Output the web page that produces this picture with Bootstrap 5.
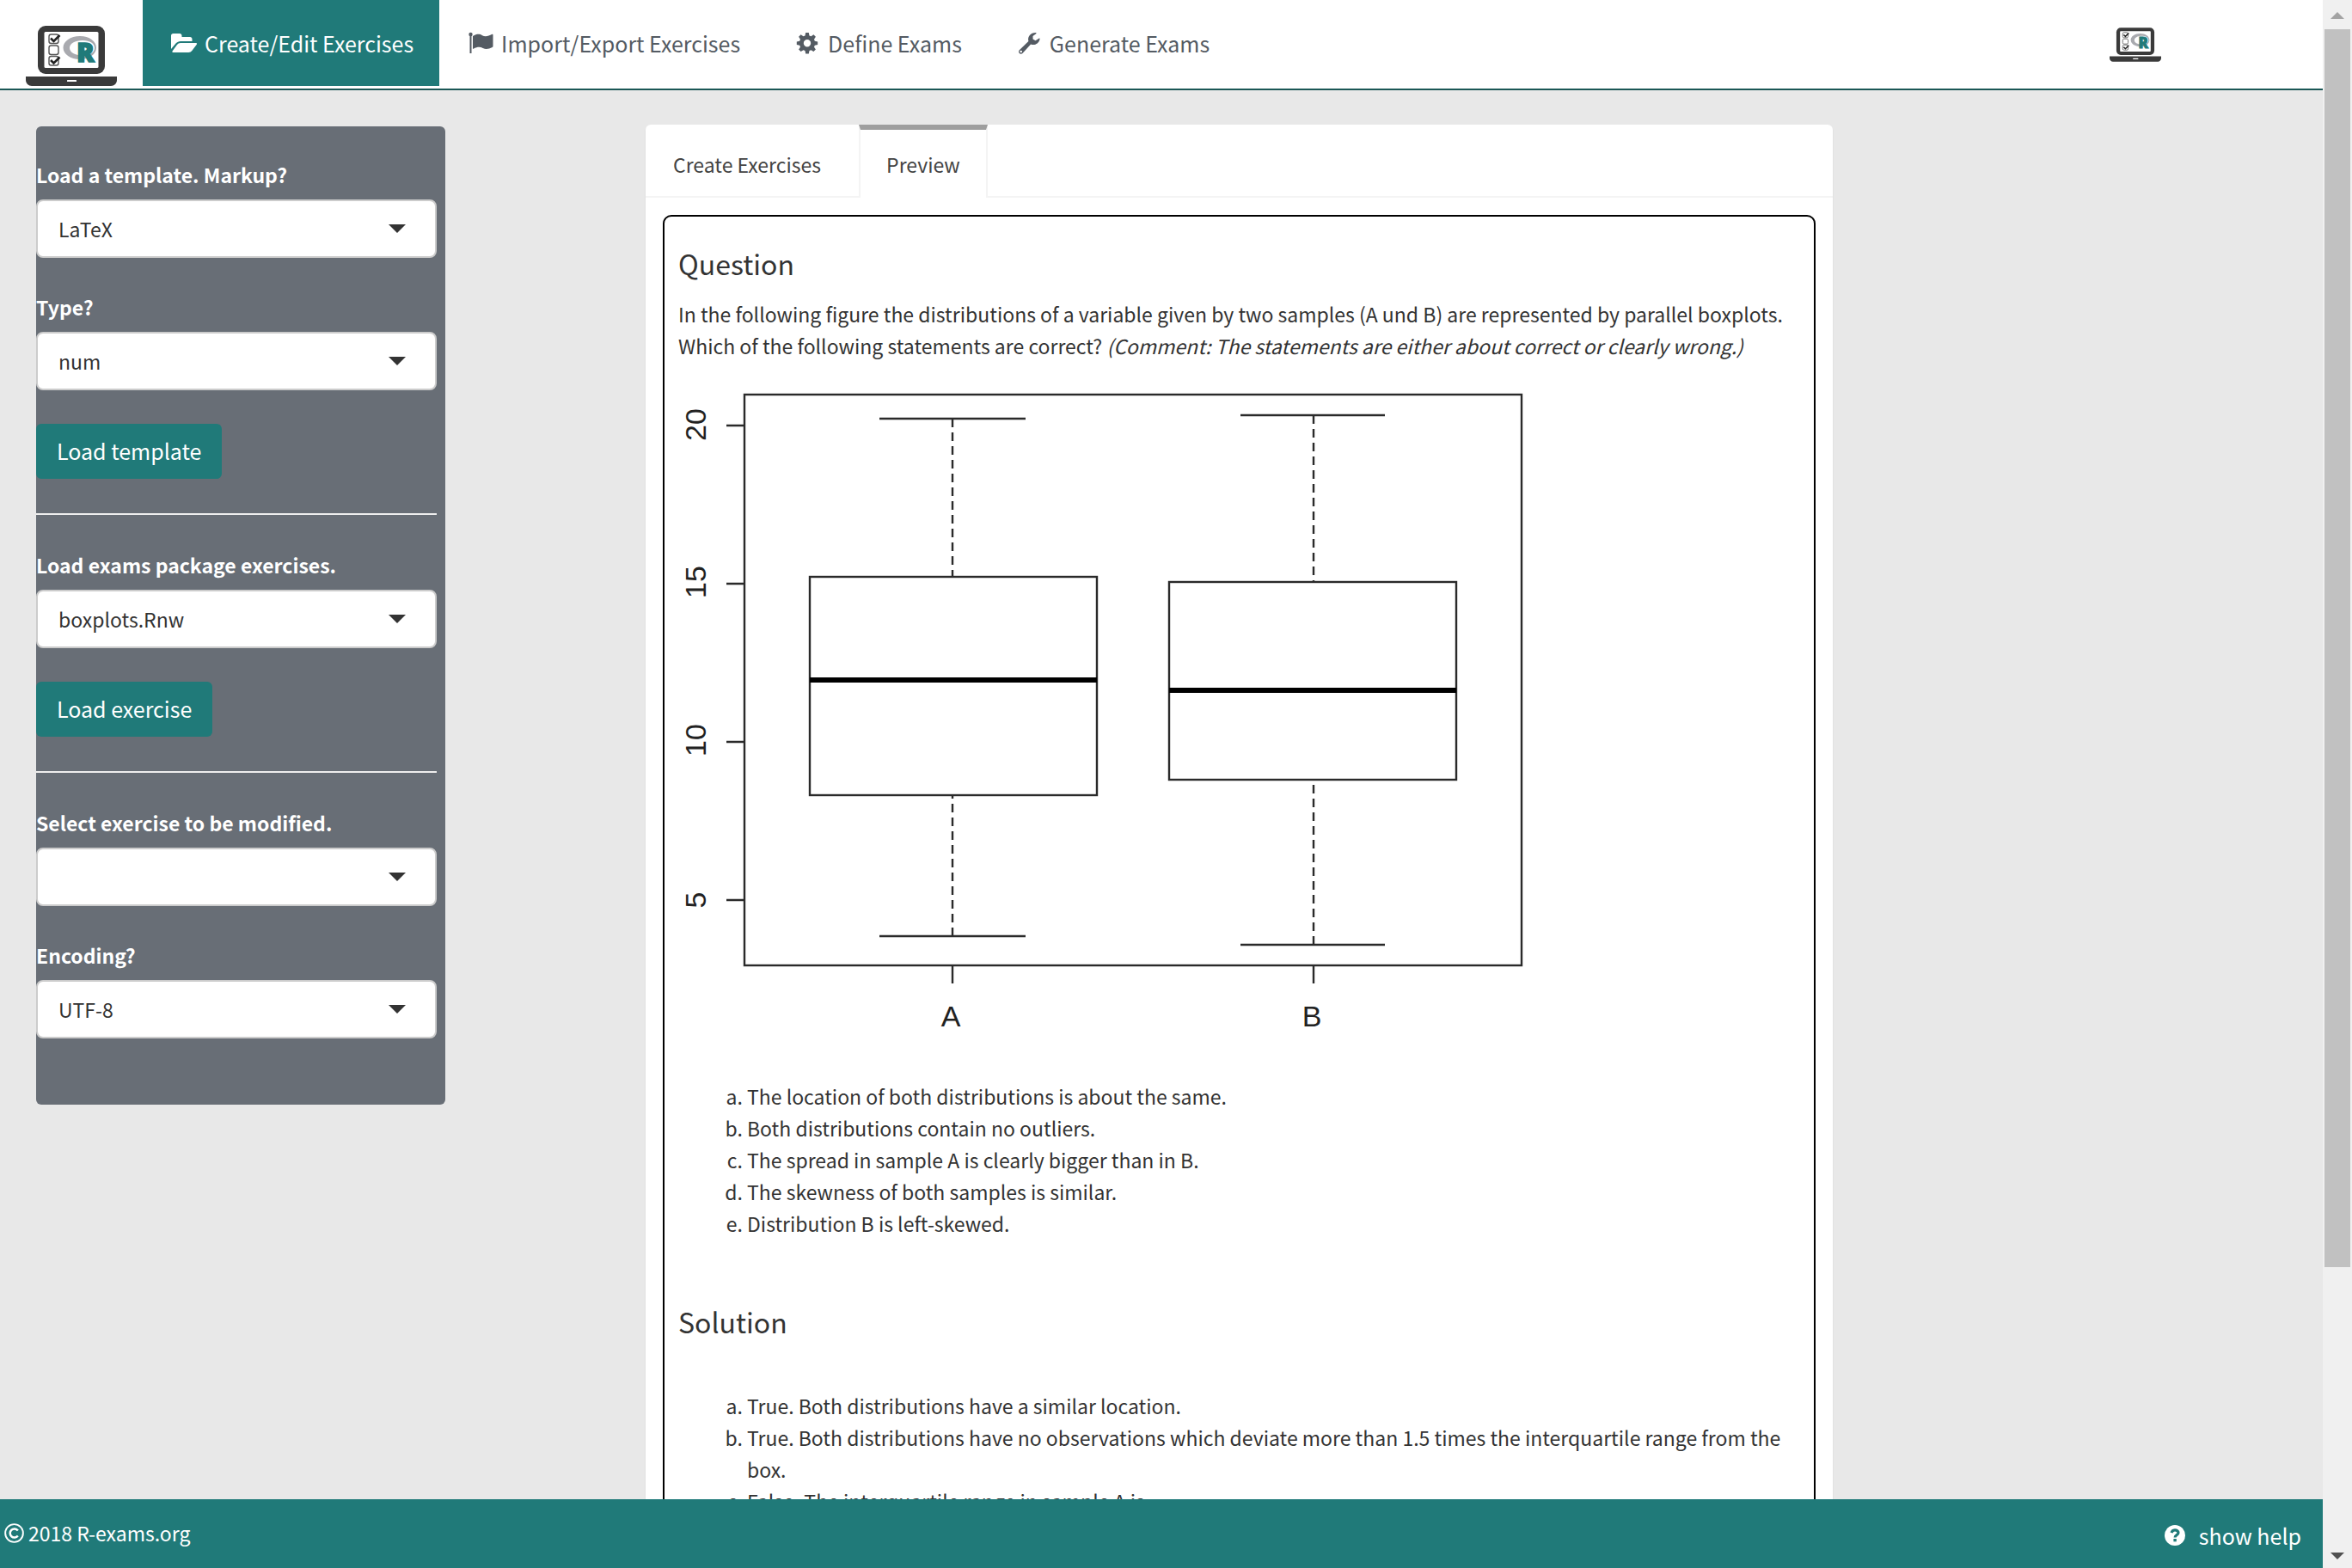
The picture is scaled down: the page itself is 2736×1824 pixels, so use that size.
<!DOCTYPE html>
<html lang="en">
<head>
<meta charset="utf-8">
<meta name="viewport" content="width=device-width, initial-scale=1">
<title>R/exams</title>
<link rel="stylesheet" href="https://cdn.jsdelivr.net/npm/bootstrap@5.3.0/dist/css/bootstrap.min.css">
<style>
:root { --teal: #207a79; --ink: #333; }
body { font-family: "Noto Sans CJK SC", "Open Sans", sans-serif; font-size: 23px; line-height: 37px; color: var(--ink); background: #e8e8e8; }
.topbar { background: #fff; border-bottom: 2px solid #1b5756; padding: 0 188px 3px 30px; }
.topbar .nav-link { height: 100px; padding: 0 30px; font-size: 25px; color: #545b63; gap: 6px; }
.topbar .nav-link.active { background: var(--teal); color: #fff; }
.topbar .nav-link svg { width: 36px; height: 28px; }
.brand-logo { width: 106px; height: 70px; margin: 30px 30px 0 0; }
.mini-logo { width: 60px; height: 40px; margin-top: 3px; }
.page-grid { display: grid; grid-template-columns: 42fr 476fr 233fr 1381fr 570fr; }
.side-panel { grid-column: 2; margin-top: 42px; padding: 38px 10px 77px 0; background: #686e76; border-radius: 6px; gap: 39px; color: #fff; align-self: start; }
.side-panel label { font-weight: 700; margin-bottom: 10px; display: block; }
.side-panel hr { margin: 1px 0; border-top: 2px solid #eee; opacity: 1; }
.side-panel .form-select { height: 68px; padding: 0 60px 0 24px; font-size: 23px; line-height: 37px; color: var(--ink); border: 2px solid #ccc; border-radius: 8px;
  background: #fff url("data:image/svg+xml,%3Csvg xmlns='http://www.w3.org/2000/svg' viewBox='0 0 20 10'%3E%3Cpath fill='%23333' d='M0 0h20L10 10z'/%3E%3C/svg%3E") no-repeat right 34px center / 20px 10px; }
.btn-teal { --bs-btn-color: #fff; --bs-btn-bg: #207a79; --bs-btn-hover-color: #fff; --bs-btn-hover-bg: #1b6665; --bs-btn-border-width: 0; --bs-btn-border-radius: 6px; height: 64px; padding: 0 24px; font-size: 25px; }
.tab-panel { grid-column: 4; margin-top: 40px; background: #fff; border-radius: 6px; box-shadow: 0 2px 2px rgba(0,0,0,.1); }
.tab-panel .nav-tabs { border-bottom: 2px solid #f4f4f4; }
.tab-panel .nav-tabs .nav-link { height: 85px; margin: 0 12px -2px 0; padding: 2px 30px 0; border: 2px solid transparent; border-top-width: 6px; border-bottom: 0; border-radius: 0; color: #444; }
.tab-panel .nav-tabs .nav-link.active { border-color: #9e9e9e #f4f4f4 #fff; background: #fff; }
.preview-box { margin: 20px; padding: 34px 16px 60px; border: 2px solid #000; border-radius: 10px; }
.preview-box h4 { font-size: 32px; font-weight: 400; line-height: 40px; margin: 0 0 21px; }
.preview-box ol { list-style: lower-alpha; padding-left: 80px; margin: 0; }
.preview-box .solution-title { padding-top: 75px; margin-bottom: 60px; }
.boxplot { display: block; width: 1000px; max-width: 100%; margin-bottom: 16px; }
.boxplot text { font-family: "Liberation Sans", Arial, sans-serif; fill: #222; text-anchor: middle; }
.statusbar { position: absolute; left: 0; right: 0; bottom: 0; height: 80px; background: var(--teal); color: #fff; padding: 0 25px 0 5px; }
.statusbar span { gap: 5px; padding-bottom: 2px; }
.statusbar a { font-size: 25px; gap: 16px; padding-top: 4px; }
.scroll-rail { width: 34px; background: #f0f0f0; padding: 14px 2px 10px; }
.scroll-rail .thumb { background: #c1c1c1; height: 80%; margin-top: 12px; }
</style>
</head>
<body>
<svg class="d-none" aria-hidden="true">
  <symbol id="logo" viewBox="0 0 106 70">
    <rect x="14" y="0" width="78" height="56" rx="9" fill="#3a3a3a"/>
    <rect x="21.500" y="7" width="63" height="42" rx="1.500" fill="#fff"/>
    <g fill="none" stroke="#555" stroke-width="1.400"><rect x="27" y="10" width="11" height="10.500" rx="2.500"/><rect x="27" y="23" width="11" height="10.500" rx="2.500"/><rect x="27" y="35.500" width="11" height="10.500" rx="2.500"/></g>
    <g fill="none" stroke="#222" stroke-width="2.600"><path d="M29 14.500l3.500 3.500 7-7"/><path d="M29 40l3.500 3.500 7-7"/></g>
    <path fill="#a9aaaf" fill-rule="evenodd" d="M63 12c11 0 19 6 19 13.500S74 39 63 39 43.500 33 43.500 25.500 52 12 63 12zM66 17c-9 0-15 3.800-15 8.800S57 34.500 66 34.500s14-3.700 14-8.700-5-8.800-14-8.800z"/>
    <text x="69.500" y="42" text-anchor="middle" font-family="Open Sans" font-weight="800" font-size="30" fill="#207a79" stroke="#207a79" stroke-width="1.600">R</text>
    <path fill="#3a3a3a" d="M0 59h106v4c0 4-3 7-7 7H7c-4 0-7-3-7-7z"/>
    <rect x="48" y="63" width="11" height="2" rx=".5" fill="#fff"/>
  </symbol>
</svg>
<div class="d-flex vh-100 overflow-hidden">
  <div class="flex-grow-1 position-relative overflow-hidden">
    <header class="topbar d-flex align-items-start">
      <a href="#" aria-label="R/exams"><svg class="brand-logo d-block"><use href="#logo"/></svg></a>
      <nav class="nav flex-grow-1">
        <a class="nav-link active d-flex align-items-center" href="#">
          <svg viewBox="0 0 36 28" fill="currentColor"><path d="M3 21V5.500C3 4 4 3 5.500 3H13c1.500 0 2.500 1 2.500 2.500V7H25c1.500 0 2.500 1 2.500 2.500V12H14c-2 0-4 1-5.500 2.500z"/><path d="M14 14h18c1.200 0 1.400.8.800 1.700l-5.500 7.300c-1 1.200-2.300 2-4 2H5.500c-1.300 0-1.500-.8-.8-1.700l5.300-7.300c1-1.200 2.300-2 4-2z"/></svg>
          Create/Edit Exercises</a>
        <a class="nav-link d-flex align-items-center" href="#">
          <svg viewBox="0 0 36 28" fill="currentColor"><circle cx="6.500" cy="4" r="2.200"/><path d="M5.500 4h2v22h-2z"/><path d="M9 6c5-3 8-2.500 11-.8 3.500 2 7 1 11.500-1.400.5-.3 1 0 1 .7v13.300c0 .6-.3 1-.8 1.200-4 2-7.500 2.800-11 1-3-1.600-6-2-11 .8-.5.300-.7 0-.7-.5z"/></svg>
          Import/Export Exercises</a>
        <a class="nav-link d-flex align-items-center" href="#">
          <svg viewBox="0 0 36 28" fill="currentColor"><path fill-rule="evenodd" d="M16.200 2h3.600l.7 3.400 2 .8 2.900-1.900 2.500 2.500-1.900 2.900.8 2 3.400.7v3.600l-3.400.7-.8 2 1.900 2.900-2.500 2.500-2.900-1.900-2 .8-.7 3.400h-3.600l-.7-3.400-2-.8-2.900 1.900-2.500-2.500L10 18.700l-.8-2-3.400-.7v-3.600l3.400-.7.8-2-1.900-2.900 2.500-2.500 2.900 1.900 2-.8zM18 10a4.200 4.200 0 100 8.400A4.200 4.200 0 0018 10z"/></svg>
          Define Exams</a>
        <a class="nav-link d-flex align-items-center" href="#">
          <svg viewBox="0 0 36 28" fill="currentColor"><path fill-rule="evenodd" d="M25.500 2c1 0 1.500.7.700 1.300L22.500 6v3.500l3 1.700 4-2.500c.8-.4 1.300 0 1 1-1 4-4 6.300-7.500 6.300-1 0-2-.2-2.900-.6L10.500 26c-1.100 1-2.700 1-3.700 0s-1-2.600 0-3.700L17.400 12C16 6.500 20 2 25.500 2zM8.700 22.700a1.300 1.300 0 100 2.600 1.300 1.300 0 000-2.600z"/></svg>
          Generate Exams</a>
      </nav>
      <svg class="mini-logo align-self-center"><use href="#logo"/></svg>
    </header>

    <main class="page-grid">
      <form class="side-panel d-flex flex-column">
        <div><label for="markup">Load a template. Markup?</label>
          <select id="markup" class="form-select"><option>LaTeX</option></select></div>
        <div><label for="type">Type?</label>
          <select id="type" class="form-select"><option>num</option></select></div>
        <button type="button" class="btn btn-teal align-self-start">Load template</button>
        <hr>
        <div><label for="package">Load exams package exercises.</label>
          <select id="package" class="form-select"><option>boxplots.Rnw</option></select></div>
        <button type="button" class="btn btn-teal align-self-start">Load exercise</button>
        <hr>
        <div><label for="modify">Select exercise to be modified.</label>
          <select id="modify" class="form-select"><option></option></select></div>
        <div><label for="encoding">Encoding?</label>
          <select id="encoding" class="form-select"><option>UTF-8</option></select></div>
      </form>

      <section class="tab-panel">
        <div class="nav nav-tabs">
          <a class="nav-link d-flex align-items-center" href="#">Create Exercises</a>
          <a class="nav-link active d-flex align-items-center" href="#">Preview</a>
        </div>
        <article class="preview-box">
          <h4>Question</h4>
          <p class="mb-0">In the following figure the distributions of a variable given by two samples (A und B) are represented by parallel boxplots. Which of the following statements are correct? <em>(Comment: The statements are either about correct or clearly wrong.)</em></p>
          <svg class="boxplot" viewBox="0 0 1000 820" role="img" aria-label="Parallel boxplots of samples A and B">
            <g fill="none" stroke="#2a2a2a" stroke-width="2.400">
              <rect x="77" y="38" width="904" height="664"/>
              <path d="M56 74h21M56 258h21M56 442h21M56 626h21M319 702v21M739 702v21"/>
              <rect x="153" y="250" width="334" height="254"/>
              <rect x="571" y="256" width="334" height="230"/>
              <path d="M234 66h170M234 668h170M654 62h168M654 678h168"/>
              <path stroke-dasharray="10 6" d="M319 66v184M319 668V504M739 62v194M739 678V486"/>
            </g>
            <path d="M153 370h334M571 382h334" stroke="#000" stroke-width="6"/>
            <g font-size="34">
              <text transform="translate(32 73) rotate(-90)">20</text>
              <text transform="translate(32 256) rotate(-90)">15</text>
              <text transform="translate(32 440) rotate(-90)">10</text>
              <text transform="translate(32 626) rotate(-90)">5</text>
              <text x="317" y="773">A</text>
              <text x="737" y="773">B</text>
            </g>
          </svg>
          <ol>
            <li>The location of both distributions is about the same.</li>
            <li>Both distributions contain no outliers.</li>
            <li>The spread in sample A is clearly bigger than in B.</li>
            <li>The skewness of both samples is similar.</li>
            <li>Distribution B is left-skewed.</li>
          </ol>
          <h4 class="solution-title">Solution</h4>
          <ol>
            <li>True. Both distributions have a similar location.</li>
            <li>True. Both distributions have no observations which deviate more than 1.5 times the interquartile range from the box.</li>
            <li>False. The interquartile range in sample A is</li>
          </ol>
        </article>
      </section>
    </main>

    <footer class="statusbar d-flex justify-content-between align-items-center">
      <span class="d-flex align-items-center">
        <svg width="23" height="23" viewBox="0 0 24 24" fill="none" stroke="#fff"><circle cx="12" cy="12" r="10.800" stroke-width="2"/><path stroke-width="2.600" d="M16.500 8.800A5.300 5.300 0 1016.500 15.200"/></svg>2018 R-exams.org</span>
      <a href="#" class="d-flex align-items-center text-white text-decoration-none">
        <svg width="24" height="24" viewBox="0 0 24 24"><circle cx="12" cy="12" r="12" fill="#fff"/><path fill="none" stroke="#207a79" stroke-width="3.200" d="M8 9c.6-2 2-3.200 4-3.200 2.300 0 4 1.300 4 3.300 0 2.600-3.900 2.500-3.900 5.300"/><rect x="10.400" y="16" width="3.400" height="3.300" fill="#207a79"/></svg>
        show help</a>
    </footer>
  </div>
  <div class="scroll-rail d-flex flex-column align-items-center flex-shrink-0" aria-hidden="true">
    <svg width="16" height="8" viewBox="0 0 16 8"><path fill="#a3a3a3" d="M0 8h16L8 0z"/></svg>
    <div class="thumb w-100"></div>
    <svg class="mt-auto" width="16" height="8" viewBox="0 0 16 8"><path fill="#505050" d="M0 0h16L8 8z"/></svg>
  </div>
</div>
<script src="https://cdn.jsdelivr.net/npm/bootstrap@5.3.0/dist/js/bootstrap.bundle.min.js"></script>
</body>
</html>
